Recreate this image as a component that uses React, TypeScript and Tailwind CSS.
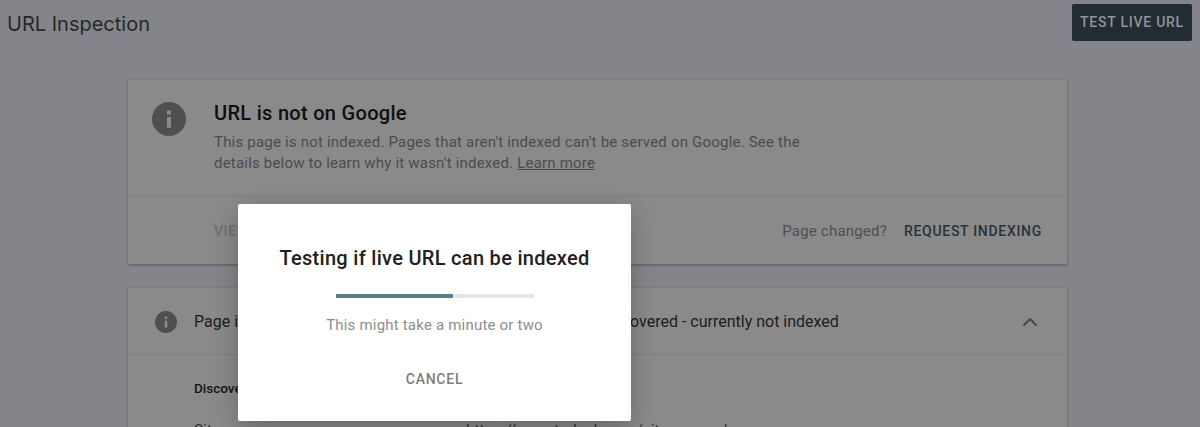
import React from "react";
import { ChevronUp } from "lucide-react";

function InfoIcon({ size }: { size: number }) {
  return (
    <svg width={size} height={size} viewBox="0 0 24 24" className="shrink-0">
      <circle cx="12" cy="12" r="12" fill="#4f4f4f" />
      <rect x="10.6" y="10.6" width="2.8" height="7.6" fill="#8a8a8a" />
      <rect x="10.6" y="6" width="2.8" height="2.8" fill="#8a8a8a" />
    </svg>
  );
}

export default function App() {
  return (
    <div className="relative h-[427px] w-[1200px] overflow-hidden bg-[#84858a] font-['Roboto',sans-serif]">
      <header className="flex h-[80px] items-start justify-between pl-[7px] pr-[8px]">
        <h1 className="mt-[12px] font-['Inter',sans-serif] text-[20px] leading-[24px] text-[#27282a]">URL Inspection</h1>
        <button className="mt-[4px] flex h-[37px] w-[120px] items-center justify-center rounded-[2px] bg-[#212c33] text-[14px] font-medium tracking-[0.75px] text-[#8f9598]">
          TEST LIVE URL
        </button>
      </header>

      <main className="ml-[128px] flex w-[939px] flex-col gap-[24px]">
        <section className="h-[184px] rounded-[2px] bg-[#8a8a8a] shadow-[0_1px_3px_rgba(0,0,0,0.35)]">
          <div className="flex h-[117px] items-start border-b border-[#7f7f7f] pl-[24px] pt-[19px]">
            <div className="mt-[3px]"><InfoIcon size={34} /></div>
            <div className="ml-[28px]">
              <h2 className="text-[20px] font-medium leading-[28px] tracking-[0.3px] text-[#0f0f0f]">URL is not on Google</h2>
              <p className="mt-[5px] w-[592px] text-[15px] leading-[21px] tracking-[0.2px] text-[#4c4c4c]">
                This page is not indexed. Pages that aren't indexed can't be served on Google. See the details below to learn why it wasn't indexed. <span className="underline">Learn more</span>
              </p>
            </div>
          </div>
          <div className="flex h-[67px] items-center justify-between pl-[86px] pr-[25px] pt-[1px]">
            <span className="text-[14px] font-medium tracking-[0.5px] text-[#6f6f6f]">VIEW TESTED PAGE</span>
            <div className="flex items-center gap-[17px]">
              <span className="text-[15px] tracking-[0.2px] text-[#4f4f4f]">Page changed?</span>
              <span className="text-[14px] font-medium tracking-[0.7px] text-[#29333a]">REQUEST INDEXING</span>
            </div>
          </div>
        </section>

        <section className="h-[160px] rounded-[2px] bg-[#8a8a8a] shadow-[0_1px_3px_rgba(0,0,0,0.35)]">
          <div className="flex h-[67px] items-center border-b border-[#7f7f7f] pl-[27px] pr-[25px] pt-[1px]">
            <InfoIcon size={22} />
            <span className="ml-[17px] w-[405px] text-[16px] text-[#1c1c1c]">Page indexing</span>
            <span className="flex-1 text-[16px] text-[#1c1c1c]">Discovered - currently not indexed</span>
            <ChevronUp size={24} strokeWidth={2} className="text-[#4a4a4a]" />
          </div>
          <div className="pl-[66px] pt-[25px]">
            <div className="text-[13.5px] font-medium leading-[16px] text-[#151515]">Discovery</div>
            <div className="mt-[25px] flex text-[15.5px] leading-[18px] text-[#333333]">
              <span className="w-[272px]">Sitemaps</span>
              <span>https://www.tpdock.com/sitemap.xml</span>
            </div>
          </div>
        </section>
      </main>

      <div role="dialog" className="absolute left-[238px] top-[204px] flex h-[217px] w-[393px] flex-col items-center rounded-[2px] bg-white shadow-[0_8px_24px_rgba(0,0,0,0.25)]">
        <h2 className="mt-[40px] text-[20px] font-medium leading-[28px] tracking-[0.3px] text-[#212121]">Testing if live URL can be indexed</h2>
        <div className="mt-[22px] h-[4px] w-[198px] bg-[#e6e6e6]">
          <div className="h-full bg-[#5b7d90]" style={{ width: "59.5%" }} />
        </div>
        <p className="mt-[16px] text-[15px] leading-[22px] tracking-[0.2px] text-[#8e8e8e]">This might take a minute or two</p>
        <button className="mt-[33px] text-[14px] font-medium leading-[20px] tracking-[0.75px] text-[#7d7d7d]">CANCEL</button>
      </div>
    </div>
  );
}
